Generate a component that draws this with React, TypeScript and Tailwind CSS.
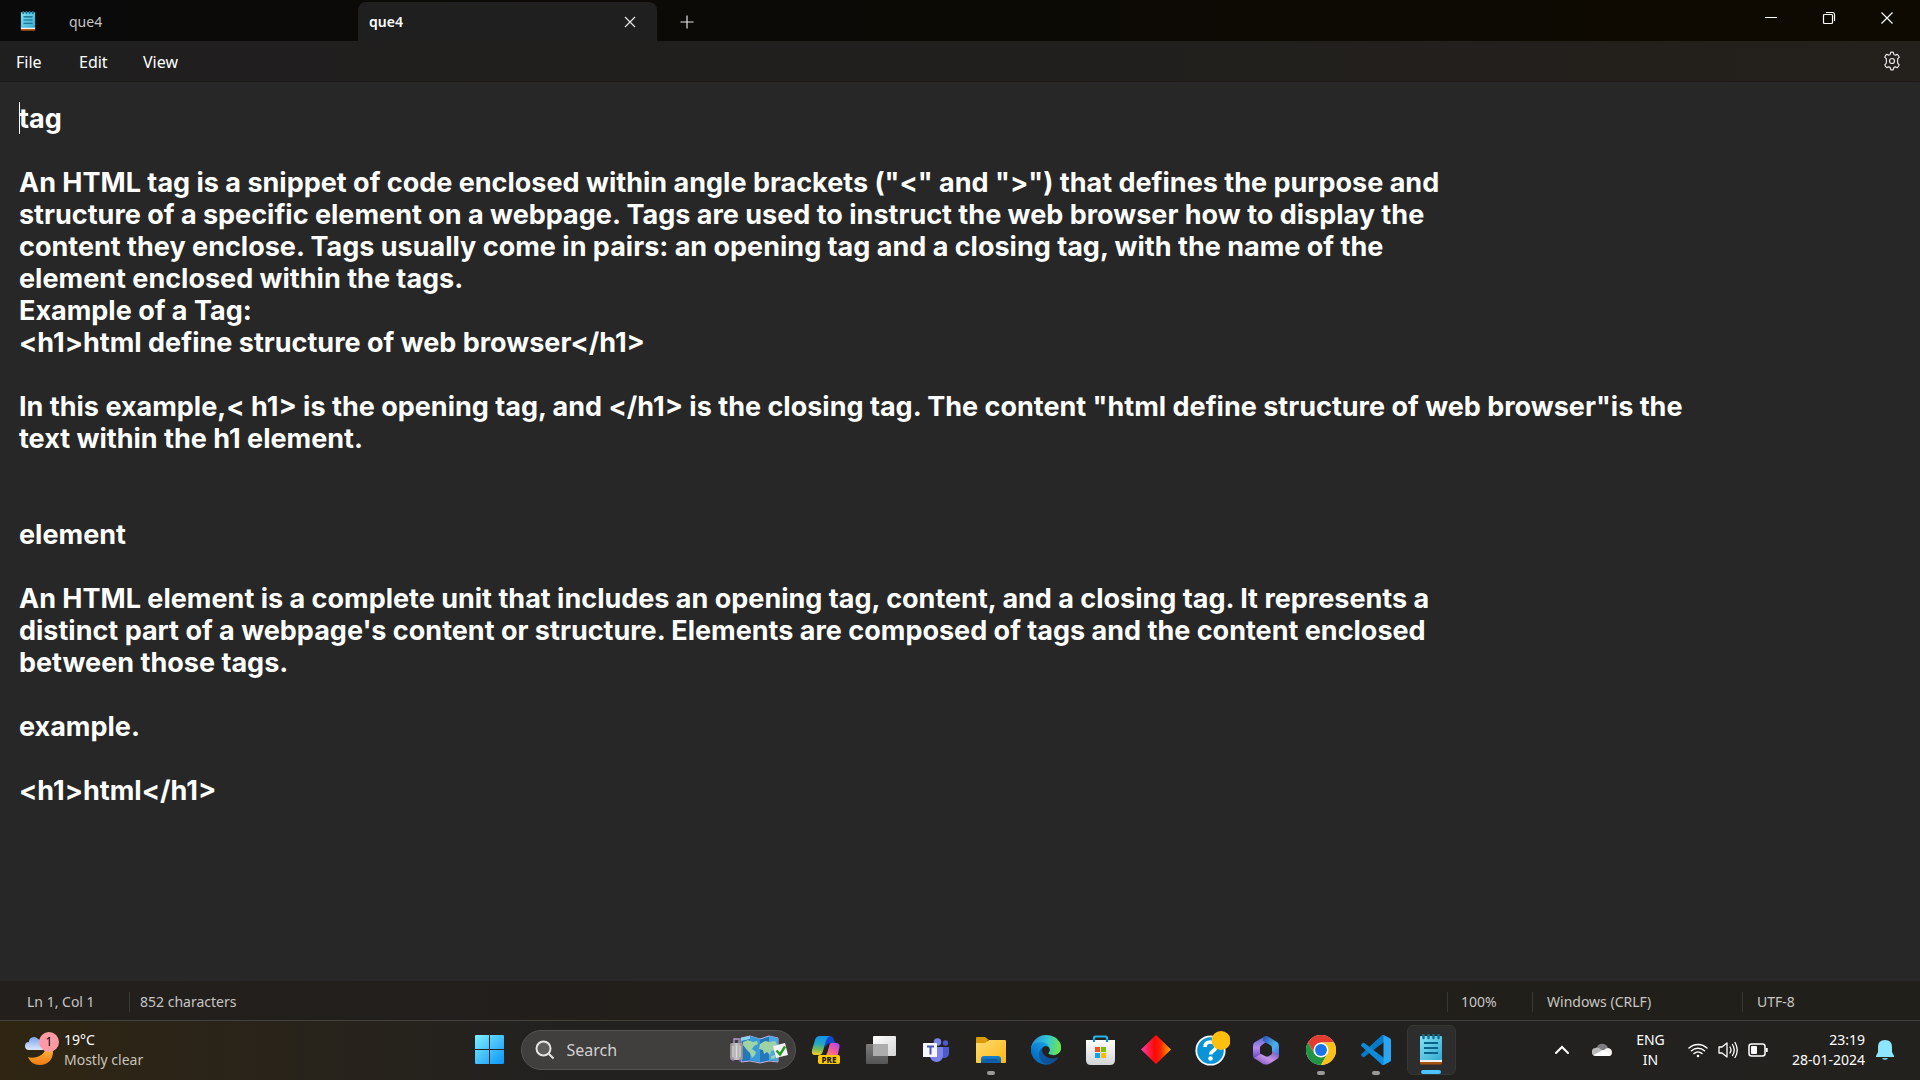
import type { ReactNode } from 'react';

const documentText = `tag

An HTML tag is a snippet of code enclosed within angle brackets ("<" and ">") that defines the purpose and
structure of a specific element on a webpage. Tags are used to instruct the web browser how to display the
content they enclose. Tags usually come in pairs: an opening tag and a closing tag, with the name of the
element enclosed within the tags.
Example of a Tag:
<h1>html define structure of web browser</h1>

In this example,< h1> is the opening tag, and </h1> is the closing tag. The content "html define structure of web browser"is the
text within the h1 element.


element

An HTML element is a complete unit that includes an opening tag, content, and a closing tag. It represents a
distinct part of a webpage's content or structure. Elements are composed of tags and the content enclosed
between those tags.

example.

<h1>html</h1>`;

function NotepadIcon({ className }: { className: string }) {
  return (
    <svg viewBox="0 0 22 31" className={className} aria-hidden="true">
      <defs>
        <linearGradient id="np" x1="0" y1="0" x2="1" y2="1">
          <stop offset="0" stopColor="#83e4f7" />
          <stop offset="1" stopColor="#35a9cf" />
        </linearGradient>
      </defs>
      <rect x="0" y="25" width="22" height="5.5" rx="1" fill="#a8520f" />
      <rect x="0" y="24" width="22" height="4" fill="#f2f2f2" />
      <rect x="0" y="2" width="22" height="24" rx="0.8" fill="url(#np)" />
      <path d="M4 9h14M4 14h14M4 19h14" stroke="#0b6488" strokeWidth="1.8" />
      <path d="M3.5 0v4M8.5 0v4M13.5 0v4M18.5 0v4" stroke="#146f92" strokeWidth="2.4" strokeLinecap="round" />
    </svg>
  );
}

function WeatherIcon() {
  return (
    <svg viewBox="0 0 36 36" className="h-9 w-9 shrink-0" aria-hidden="true">
      <defs>
        <linearGradient id="moon" x1="0" y1="0" x2="0" y2="1">
          <stop offset="0" stopColor="#ffc940" />
          <stop offset="1" stopColor="#f27a17" />
        </linearGradient>
        <linearGradient id="cloud" x1="0" y1="0" x2="0" y2="1">
          <stop offset="0" stopColor="#78a5ee" />
          <stop offset="1" stopColor="#dce8fc" />
        </linearGradient>
      </defs>
      <path d="M22 11c1 6-2 12-9 14-4 1-7 1-9 0 2 5 6 8 12 8 8 0 13-6 13-13-.5-4-3-7-7-9z" fill="url(#moon)" />
      <path d="M5 18a4 4 0 0 1 0-8 5 5 0 0 1 9-3 5 5 0 0 1 4 4 3.600 3.600 0 0 1 1 7z" fill="url(#cloud)" />
      <circle cx="25" cy="10" r="10" fill="#ff9aa5" />
    </svg>
  );
}

function StartIcon() {
  return (
    <svg viewBox="0 0 29 29" className="h-[29px] w-[29px]" aria-hidden="true">
      <defs>
        <linearGradient id="win" x1="0" y1="0" x2="29" y2="29" gradientUnits="userSpaceOnUse">
          <stop offset="0" stopColor="#7cf0fd" />
          <stop offset="0.5" stopColor="#45c0fb" />
          <stop offset="1" stopColor="#0c95f8" />
        </linearGradient>
      </defs>
      <path d="M1 0h13v14H0V1q0-1 1-1zM15 0h13q1 0 1 1v13H15zM0 15h14v14H1q-1 0-1-1zM15 15h14v13q0 1-1 1H15z" fill="url(#win)" />
    </svg>
  );
}

function TravelArt() {
  return (
    <svg viewBox="0 0 60 30" className="h-[30px] w-[60px] shrink-0" aria-hidden="true">
      <defs>
        <linearGradient id="bag" x1="0" y1="0" x2="1" y2="0">
          <stop offset="0" stopColor="#8d8a90" />
          <stop offset="0.5" stopColor="#c9c6c7" />
          <stop offset="1" stopColor="#8b888c" />
        </linearGradient>
      </defs>
      <path d="M12 3l9-2 10 3 9-3 9 2v24l-9-1-9 2-10-2-9 1z" fill="#2377bb" stroke="#c0b2e4" strokeWidth="1" />
      <path d="M21 1l10 3v23l-10-2z" fill="#3a9bdb" />
      <path d="M40 1l9 2v23l-9-1z" fill="#4aa9e3" />
      <path d="M14 7l5-2 5 2 4-1 1 3-4 2-2 3 4 3-1 3-3 3-2-5-3-3-4-5zM31 9l5-3 5 1 5-1 2 3-3 2 1 4-4 1-1 4-3-3-3 2-1-4-4-1zM42 21l4-1v3l-4 1z" fill="#9ed4a4" />
      <path d="M12 3l9-2v3l-9 2z" fill="#8bd3ee" />
      <path d="M5 9V4h5v5" fill="none" stroke="#b79fd6" strokeWidth="1.300" />
      <rect x="1" y="8" width="13" height="17" rx="2" fill="url(#bag)" />
      <path d="M4 11v11M7.500 11v11M11 11v11" stroke="#dedbdc" strokeWidth="1" />
      <path d="M3 25.500h2M10 25.500h2" stroke="#7d56ad" strokeWidth="1.500" />
      <path d="M44 11l12-3 3 12-12 3z" fill="#f5f1fb" />
      <path d="M47.500 15.500l3.500 4 5-8" fill="none" stroke="#1f9d1b" strokeWidth="2.400" />
    </svg>
  );
}

function CopilotIcon() {
  return (
    <svg viewBox="0 0 30 30" className="h-[30px] w-[30px]" aria-hidden="true">
      <defs>
        <linearGradient id="cpA" x1="0.3" y1="0" x2="0.2" y2="1">
          <stop offset="0" stopColor="#1293ea" />
          <stop offset="0.4" stopColor="#26a7c2" />
          <stop offset="0.7" stopColor="#79bb55" />
          <stop offset="1" stopColor="#ffd02a" />
        </linearGradient>
        <linearGradient id="cpB" x1="1" y1="0" x2="0" y2="1">
          <stop offset="0" stopColor="#a646f5" />
          <stop offset="0.5" stopColor="#ef5a9f" />
          <stop offset="1" stopColor="#ff9d4c" />
        </linearGradient>
      </defs>
      <path d="M15 1h4q3 0 4 4l1 3h-4q-4 0-6 5z" fill="#1247d0" />
      <path d="M9 1h10q-3 1-4 5l-3 10q-1 4-4 4H4q-4 0-3-5L4 5q1-4 5-4z" fill="url(#cpA)" />
      <path d="M20 8h5q4 0 3.500 4l-2 9H13q3-1 3.500-4l2-7q.5-2 1.500-2z" fill="url(#cpB)" />
      <rect x="7" y="20" width="22" height="9" rx="2" fill="#ffca0a" />
      <text x="18" y="27.500" textAnchor="middle" fontFamily="Noto Sans, sans-serif" fontWeight="800" fontSize="8" fill="#201800">PRE</text>
    </svg>
  );
}

function TaskViewIcon() {
  return (
    <svg viewBox="0 0 30 30" className="h-[30px] w-[30px]" aria-hidden="true">
      <defs>
        <linearGradient id="tvF" x1="0" y1="0" x2="1" y2="1">
          <stop offset="0" stopColor="#ffffff" />
          <stop offset="1" stopColor="#d4d4d4" />
        </linearGradient>
        <linearGradient id="tvB" x1="0" y1="0" x2="0" y2="1">
          <stop offset="0" stopColor="#7b7b7b" />
          <stop offset="1" stopColor="#555555" />
        </linearGradient>
      </defs>
      <rect x="0" y="9" width="22" height="20" rx="1" fill="url(#tvB)" />
      <rect x="7" y="1" width="23" height="20" rx="1" fill="url(#tvF)" />
      <path d="M7 9h15v12H7z" fill="#adadad" />
    </svg>
  );
}

function TeamsIcon() {
  return (
    <svg viewBox="0 0 30 30" className="h-[30px] w-[30px]" aria-hidden="true">
      <circle cx="16.500" cy="7" r="3.800" fill="#7b83eb" />
      <circle cx="24.500" cy="8" r="2.700" fill="#5059c9" />
      <path d="M18 12h10v7a5 5 0 0 1-8 3z" fill="#5059c9" />
      <path d="M9 12h13v9a6.500 6 0 0 1-13 0z" fill="#7b83eb" />
      <rect x="2" y="8" width="14" height="14" rx="0.5" fill="#f7f7ff" />
      <path d="M6 11.500h7M9.500 11.500v8" stroke="#4b53bc" strokeWidth="2" />
    </svg>
  );
}

function FolderIcon() {
  return (
    <svg viewBox="0 0 30 30" className="h-[30px] w-[30px]" aria-hidden="true">
      <defs>
        <linearGradient id="fold" x1="0" y1="0" x2="1" y2="1">
          <stop offset="0" stopColor="#ffdb70" />
          <stop offset="1" stopColor="#fdb813" />
        </linearGradient>
        <linearGradient id="foldB" x1="0" y1="0" x2="0" y2="1">
          <stop offset="0" stopColor="#1681d0" />
          <stop offset="1" stopColor="#0b5ba8" />
        </linearGradient>
      </defs>
      <path d="M0 3q0-1 1-1h8l4 3h-1l-2 4H0z" fill="#dc9a09" />
      <path d="M0 8h9l4-3h16q1 0 1 1v21q0 1-1 1H1q-1 0-1-1z" fill="url(#fold)" />
      <path d="M5 28v-4q0-3 3-3h14q3 0 3 3v4z" fill="url(#foldB)" />
      <path d="M9 25h12" stroke="#0a4a88" strokeWidth="1.200" strokeLinecap="round" />
    </svg>
  );
}

function EdgeIcon() {
  return (
    <svg viewBox="0 0 256 256" className="h-[30px] w-[30px]" aria-hidden="true">
      <defs>
        <linearGradient id="eg1" x1="64" y1="178" x2="238" y2="178" gradientUnits="userSpaceOnUse">
          <stop offset="0" stopColor="#0c59a4" />
          <stop offset="1" stopColor="#114a8b" />
        </linearGradient>
        <linearGradient id="eg2" x1="158" y1="101" x2="46" y2="223" gradientUnits="userSpaceOnUse">
          <stop offset="0" stopColor="#1b9de2" />
          <stop offset="0.6" stopColor="#0a7ed2" />
          <stop offset="1" stopColor="#0669bc" />
        </linearGradient>
        <linearGradient id="eg3" x1="20" y1="70" x2="240" y2="110" gradientUnits="userSpaceOnUse">
          <stop offset="0" stopColor="#2493d8" />
          <stop offset="0.5" stopColor="#34c6d4" />
          <stop offset="1" stopColor="#68e553" />
        </linearGradient>
      </defs>
      <path fill="url(#eg1)" d="M231 190c-4 2-7 3-11 5a101 101 0 0 1-36 6c-47 0-89-33-89-75 0-11 7-22 17-28-43 2-54 46-54 72 0 74 68 81 82 81 8 0 20-2 27-4l1-1a128 128 0 0 0 66-53c2-2 0-4-3-3z" />
      <path fill="url(#eg2)" d="M106 241a79 79 0 0 1-23-21 81 81 0 0 1 29-122c3-1 8-4 15-4a31 31 0 0 1 25 13c3 4 6 9 6 15 0-1 25-80-80-80C34 42 -2 84 -2 121c0 19 4 38 12 56a128 128 0 0 0 157 67c-20 6-42 4-61-3z" />
      <path fill="url(#eg3)" d="M152 149c-1 1-3 3-3 6 0 3 2 6 5 8 14 10 42 9 42 9 11 0 22-3 31-9a63 63 0 0 0 31-54c0-23-8-38-11-44C226 24 182 0 128 0A128 128 0 0 0 0 126c0-37 37-66 80-66 4 0 24 0 43 10 16 9 25 19 31 30 6 11 7 25 7 30 0 6-3 13-9 19z" />
    </svg>
  );
}

function StoreIcon() {
  return (
    <svg viewBox="0 0 30 30" className="h-[30px] w-[30px]" aria-hidden="true">
      <defs>
        <linearGradient id="store" x1="0" y1="0" x2="0" y2="1">
          <stop offset="0" stopColor="#ffffff" />
          <stop offset="1" stopColor="#d2d4d6" />
        </linearGradient>
      </defs>
      <path d="M8 7V3q0-1.500 1.500-1.500h10q1.500 0 1.500 1.500v4" fill="none" stroke="#28b4ea" strokeWidth="2.200" />
      <path d="M0 5h29v20q0 5-5 5H5q-5 0-5-5z" fill="url(#store)" />
      <path d="M8 4v3M21 4v3" stroke="#168bd0" strokeWidth="2.200" />
      <path d="M9 12h5v5H9z" fill="#f35325" />
      <path d="M15 12h5v5h-5z" fill="#81bc06" />
      <path d="M9 18h5v5H9z" fill="#05a6f0" />
      <path d="M15 18h5v5h-5z" fill="#ffba08" />
    </svg>
  );
}

function DiamondIcon() {
  return (
    <svg viewBox="0 0 30 30" className="h-[30px] w-[30px]" aria-hidden="true">
      <defs>
        <linearGradient id="dia" x1="0" y1="0" x2="1" y2="0">
          <stop offset="0" stopColor="#ff3fa8" />
          <stop offset="0.45" stopColor="#ff0808" />
          <stop offset="0.65" stopColor="#ff2400" />
          <stop offset="1" stopColor="#ffae00" />
        </linearGradient>
      </defs>
      <path d="M15 0l15 14.500L15 29 0 14.500z" fill="url(#dia)" />
    </svg>
  );
}

function HelpIcon() {
  return (
    <svg viewBox="0 0 38 38" className="h-[38px] w-[38px]" aria-hidden="true">
      <circle cx="18.500" cy="19.500" r="14.200" fill="#0a94d8" stroke="#f4f8fb" strokeWidth="1.800" />
      <path d="M13 16q0-5 5.500-5t5.500 4.500q0 2.500-2.700 4.200-2.600 1.700-2.600 3.800" fill="none" stroke="#ffffff" strokeWidth="3.600" />
      <circle cx="18.500" cy="27.500" r="2.300" fill="#ffffff" />
      <circle cx="29" cy="9.500" r="9.500" fill="#ffbf0f" />
    </svg>
  );
}

function OfficeIcon() {
  return (
    <svg viewBox="0 0 30 30" className="h-[30px] w-[30px]" aria-hidden="true">
      <defs>
        <linearGradient id="of1" x1="0" y1="0" x2="0" y2="1">
          <stop offset="0" stopColor="#5d6bd0" />
          <stop offset="0.5" stopColor="#b58af0" />
          <stop offset="1" stopColor="#5a3fc0" />
        </linearGradient>
        <linearGradient id="of2" x1="0" y1="0" x2="1" y2="1">
          <stop offset="0" stopColor="#2f4db4" />
          <stop offset="0.6" stopColor="#4cb2ee" />
          <stop offset="1" stopColor="#4a68dc" />
        </linearGradient>
        <linearGradient id="of3" x1="0" y1="1" x2="1" y2="0">
          <stop offset="0" stopColor="#6c45bd" />
          <stop offset="0.5" stopColor="#c594e2" />
          <stop offset="1" stopColor="#6750c5" />
        </linearGradient>
      </defs>
      <path d="M13 2L4 7q-2 1-2 4v10q0 2 2 3l6-4q-1-1-1-3v-4q0-2 2-3l4-3z" fill="url(#of1)" />
      <path d="M12 2q3-2 6 0l8 5q2 1 2 4v10l-7-4v-4q0-2-2-3l-7-4z" fill="url(#of2)" />
      <path d="M3 23l7-4 4 2q2 1 4 0l3-2v-3l7 4q0 3-2 4l-8 5q-3 1-6 0z" fill="url(#of3)" />
    </svg>
  );
}

function ChromeIcon() {
  return (
    <svg viewBox="0 0 48 48" className="h-[30px] w-[30px]" aria-hidden="true">
      <circle cx="24" cy="24" r="24" fill="#ffffff" />
      <path d="M24 12h20.800A24 24 0 0 0 3.200 12l10.400 18z" fill="#e33b2e" />
      <path d="M13.600 30L3.200 12A24 24 0 0 0 24 48l10.400-18z" fill="#229342" />
      <path d="M34.400 30L24 48a24 24 0 0 0 20.800-36H24z" fill="#fbc116" />
      <circle cx="24" cy="24" r="12" fill="#ffffff" />
      <circle cx="24" cy="24" r="9.500" fill="#1a73e8" />
    </svg>
  );
}

function CodeIcon() {
  return (
    <svg viewBox="0 0 100 100" className="h-[30px] w-[30px]" aria-hidden="true">
      <path d="M97 11L76 1q-4-2-7 1L1 63q-2 2 0 5l5 5q2 2 5 0L93 11q4-3 7 2z" fill="#0879c8" />
      <path d="M97 89L76 99q-4 2-7-1L1 37q-2-2 0-5l5-5q2-2 5 0l82 62q4 3 7-2z" fill="#0f8ad8" />
      <path d="M76 99q-4 2-7-1 5 3 6-3V5q-1-6-6-3 3-3 7-1l20 10q4 2 4 6v66q0 4-4 6z" fill="#2aa5f2" />
    </svg>
  );
}

type TaskApp = { name: string; icon: ReactNode; mark?: 'open' | 'active' };

const taskApps: TaskApp[] = [
  { name: 'Copilot', icon: <CopilotIcon /> },
  { name: 'Task view', icon: <TaskViewIcon /> },
  { name: 'Teams', icon: <TeamsIcon /> },
  { name: 'File Explorer', icon: <FolderIcon />, mark: 'open' },
  { name: 'Edge', icon: <EdgeIcon /> },
  { name: 'Store', icon: <StoreIcon /> },
  { name: 'Diamond', icon: <DiamondIcon /> },
  { name: 'Help', icon: <HelpIcon /> },
  { name: 'Microsoft 365', icon: <OfficeIcon /> },
  { name: 'Chrome', icon: <ChromeIcon />, mark: 'open' },
  { name: 'Visual Studio Code', icon: <CodeIcon />, mark: 'open' },
  { name: 'Notepad', icon: <NotepadIcon className="h-[31px] w-[22px]" />, mark: 'active' },
];

function TitleBar() {
  return (
    <header className="flex h-[41px] shrink-0 items-end bg-linear-to-r from-[#0a0a0a] to-[#0e0a01]">
      <div className="flex h-full w-[57px] items-center pl-5">
        <NotepadIcon className="h-5 w-4" />
      </div>
      <div role="tablist" className="flex h-full items-end">
        <button role="tab" aria-selected="false" className="flex h-[39px] w-[301px] items-center pl-3 text-sm text-[#c4c4c4]">
          que4
        </button>
        <div className="flex h-[39px] w-[299px] items-center justify-between rounded-t-lg bg-[#201f1f] pr-[19px] pl-[11px]">
          <button role="tab" aria-selected="true" className="text-sm font-semibold text-white">
            que4
          </button>
          <button aria-label="Close tab">
            <svg viewBox="0 0 16 16" className="h-4 w-4" fill="none" stroke="#e6e6e6" strokeWidth="1.200">
              <path d="M3 3l10 10M13 3L3 13" />
            </svg>
          </button>
        </div>
      </div>
      <button aria-label="New tab" className="ml-[22px] flex h-[39px] items-center">
        <svg viewBox="0 0 16 16" className="h-4 w-4" fill="none" stroke="#e6e6e6" strokeWidth="1.200">
          <path d="M8 1.500v13M1.500 8h13" />
        </svg>
      </button>
      <div className="mr-1 ml-auto flex h-9 items-center self-start">
        <button aria-label="Minimize" className="flex h-full w-[58px] items-center justify-center">
          <svg viewBox="0 0 12 12" className="h-3 w-3" stroke="#ffffff">
            <path d="M0 5.500h12" />
          </svg>
        </button>
        <button aria-label="Restore" className="flex h-full w-[58px] items-center justify-center">
          <svg viewBox="0 0 12 12" className="h-3 w-3 overflow-visible" fill="none" stroke="#ffffff" strokeWidth="1.200">
            <rect x="0.500" y="2.500" width="9" height="9" rx="1" />
            <path d="M3 .5h6.500q2 0 2 2V9" />
          </svg>
        </button>
        <button aria-label="Close" className="flex h-full w-[58px] items-center justify-center">
          <svg viewBox="0 0 12 12" className="h-3 w-3" stroke="#ffffff" strokeWidth="1.200">
            <path d="M.5.5l11 11M11.500.5l-11 11" />
          </svg>
        </button>
      </div>
    </header>
  );
}

function MenuBar() {
  return (
    <nav className="flex h-[41px] shrink-0 items-center border-b border-[#1c1b19] bg-linear-to-r from-[#201f1f] via-[#201f1d] to-[#24201b] text-base text-white">
      <div className="flex pt-0.5">
        <button className="w-[62px] pl-4 text-left">File</button>
        <button className="w-[66px] pl-[17px] text-left">Edit</button>
        <button className="pl-[15px] text-left">View</button>
      </div>
      <button aria-label="Settings" className="mr-[18px] ml-auto">
        <svg viewBox="0 0 20 20" className="h-5 w-5" fill="none" stroke="#e9e9e9" strokeWidth="1.200" strokeLinejoin="round">
          <path d="M8.300 3.200L8.700 1.300Q10 .9 11.300 1.300L11.700 3.200Q12.200 4 13.300 4.100L15.300 3.400Q16.800 4.600 17.200 6.100L15.800 7.600Q15.200 10 15.800 12.400L17.200 13.900Q16.500 15.700 15.200 16.700L13.300 15.900Q12.200 16 11.700 16.800L11.300 18.700Q10 19.100 8.700 18.700L8.300 16.800Q7.800 16 6.700 15.900L4.700 16.600Q3.200 15.400 2.800 13.900L4.200 12.400Q4.800 10 4.200 7.600L2.800 6.100Q3.500 4.300 4.800 3.300L6.700 4.100Q7.800 4 8.300 3.200z" />
          <circle cx="10" cy="10" r="2.500" />
        </svg>
      </button>
    </nav>
  );
}

function StatusBar() {
  return (
    <footer className="flex h-[39px] shrink-0 items-center bg-linear-to-r from-[#221f1c] to-[#211f19] pt-0.5 text-sm text-[#c8c6c4]">
      <span className="flex h-5 w-[129px] items-center pl-[27px]">Ln 1, Col 1</span>
      <span className="flex h-5 items-center border-l border-[#3a3835] pl-[10px]">852 characters</span>
      <span className="ml-auto flex h-5 w-[85px] items-center border-l border-[#3a3835] pl-[13px]">100%</span>
      <span className="flex h-5 w-[210px] items-center border-l border-[#3a3835] pl-[14px]">Windows (CRLF)</span>
      <span className="flex h-5 w-[178px] items-center border-l border-[#3a3835] pl-[14px]">UTF-8</span>
    </footer>
  );
}

function Taskbar() {
  return (
    <div className="grid h-[60px] shrink-0 grid-cols-[1fr_auto_1fr] items-center border-t border-[#44423d] bg-linear-to-r from-[#2f2512] via-[#222120] via-30% to-[#22211e] pb-0.5">
      <button className="relative flex items-center gap-1 justify-self-start pl-6 text-left text-sm leading-5">
        <WeatherIcon />
        <span className="absolute top-0.5 left-[39px] flex h-5 w-5 items-center justify-center text-xs text-black">1</span>
        <span className="text-[#c9c4ba]">
          <span className="block text-white">19°C</span>
          Mostly clear
        </span>
      </button>

      <div className="flex items-center gap-[6px]">
        <button aria-label="Start" className="flex h-[49px] w-[50px] items-center justify-center">
          <StartIcon />
        </button>
        <label className="flex h-10 w-[275px] items-center rounded-full border border-[#555453] bg-[#403f3e] pr-[6px] pl-[13px]">
          <svg viewBox="0 0 20 20" className="h-5 w-5 shrink-0" fill="none" stroke="#e4e4e4" strokeWidth="2" aria-hidden="true">
            <circle cx="8.500" cy="8.500" r="7" fill="#5d5c5b" />
            <path d="M13.500 13.500l5 5" />
          </svg>
          <input aria-label="Search" placeholder="Search" className="ml-3 min-w-0 flex-1 bg-transparent text-base text-white placeholder:text-[#d2d1d0] focus:outline-none" />
          <TravelArt />
        </label>
        {taskApps.map((app) => (
          <button
            key={app.name}
            aria-label={app.name}
            className={
              app.mark === 'active'
                ? 'relative flex h-[50px] w-[49px] items-center justify-center rounded-md border border-[#363635] bg-[#2d2d2d]'
                : 'relative flex h-[50px] w-[49px] items-center justify-center'
            }
          >
            {app.icon}
            {app.mark === 'open' && <span className="absolute bottom-0 h-1 w-2 rounded-full bg-[#9a9a9a]" />}
            {app.mark === 'active' && <span className="absolute bottom-0 h-1 w-5 rounded-full bg-[#4cc2ff]" />}
          </button>
        ))}
      </div>

      <div className="flex items-center justify-self-end pr-[26px] text-sm leading-5 text-white">
        <button aria-label="Show hidden icons">
          <svg viewBox="0 0 16 10" className="h-[10px] w-4" fill="none" stroke="#ffffff" strokeWidth="2" strokeLinecap="round">
            <path d="M2 8l6-6 6 6" />
          </svg>
        </button>
        <button aria-label="OneDrive" className="ml-[22px]">
          <svg viewBox="0 0 20 14" className="h-[14px] w-5">
            <path d="M5 4a6 6 0 0 1 11 1l-5 4-9-3z" fill="#7d7d7d" />
            <path d="M4 13a4 4 0 0 1-.5-8q3-.8 5 1l6 4-6 3z" fill="#b9b9b9" />
            <path d="M3.500 13L12 7q2-2 4-2 4 .5 4 4.500 0 3.500-4 3.500z" fill="#f4f4f4" />
            <path d="M1.500 12L11 7l8 5q-1 1-3 1H4q-1.500 0-2.500-1z" fill="#ffffff" />
          </svg>
        </button>
        <button className="ml-[22px] w-[33px] text-center">
          ENG
          <br />
          IN
        </button>
        <button aria-label="Network, sound and battery" className="ml-[21px] flex items-center gap-[10px]">
          <svg viewBox="0 0 20 16" className="h-4 w-5" fill="none" stroke="#ffffff" strokeWidth="1.500" strokeLinecap="round">
            <path d="M1 6a13 13 0 0 1 18 0M3.500 8.800a9.500 9.500 0 0 1 13 0M6 11.500a6 6 0 0 1 8 0" />
            <circle cx="10" cy="14" r="1.300" fill="#ffffff" stroke="none" />
          </svg>
          <svg viewBox="0 0 20 18" className="h-[18px] w-5" fill="none" stroke="#ffffff" strokeWidth="1.300" strokeLinecap="round" strokeLinejoin="round">
            <path d="M1 6h3l5-4v14l-5-4H1zM12 6q2 3 0 6M14.500 3.500q3.500 5.500 0 11M17 1.500q4.500 7.500 0 15" />
          </svg>
          <svg viewBox="0 0 20 14" className="h-[14px] w-5" fill="none" stroke="#ffffff" strokeWidth="1.500">
            <rect x="1" y="1" width="16" height="12" rx="2.500" />
            <rect x="3" y="3" width="6" height="8" rx="1" fill="#ffffff" stroke="none" />
            <path d="M18.700 5v4" strokeWidth="2" />
          </svg>
        </button>
        <button className="ml-5 w-[77px] text-right whitespace-nowrap">
          23:19
          <br />
          28-01-2024
        </button>
        <button aria-label="Notifications" className="ml-[11px]">
          <svg viewBox="0 0 18 20" className="h-5 w-[18px]" fill="#8ce6fd">
            <path d="M9 0q7 0 7 7v5l2 4v1H0v-1l2-4V7q0-7 7-7z" />
            <path d="M6 18h6q-1 2-3 2t-3-2z" fill="#6fc4dc" />
          </svg>
        </button>
      </div>
    </div>
  );
}

export default function App() {
  return (
    <div className="flex h-screen flex-col overflow-hidden bg-[#272727] font-['Noto_Sans',sans-serif]">
      <TitleBar />
      <MenuBar />
      <main className="relative flex min-h-0 flex-1">
        <textarea
          aria-label="Text editor"
          wrap="off"
          spellCheck={false}
          defaultValue={documentText}
          className="w-full resize-none overflow-hidden bg-[#272727] px-[19px] pt-[21px] font-['Inter','Liberation_Sans',sans-serif] text-[27px] leading-8 font-bold text-white outline-none"
        />
        <span className="absolute top-5 left-[19px] h-8 w-px bg-white" />
      </main>
      <StatusBar />
      <Taskbar />
    </div>
  );
}
